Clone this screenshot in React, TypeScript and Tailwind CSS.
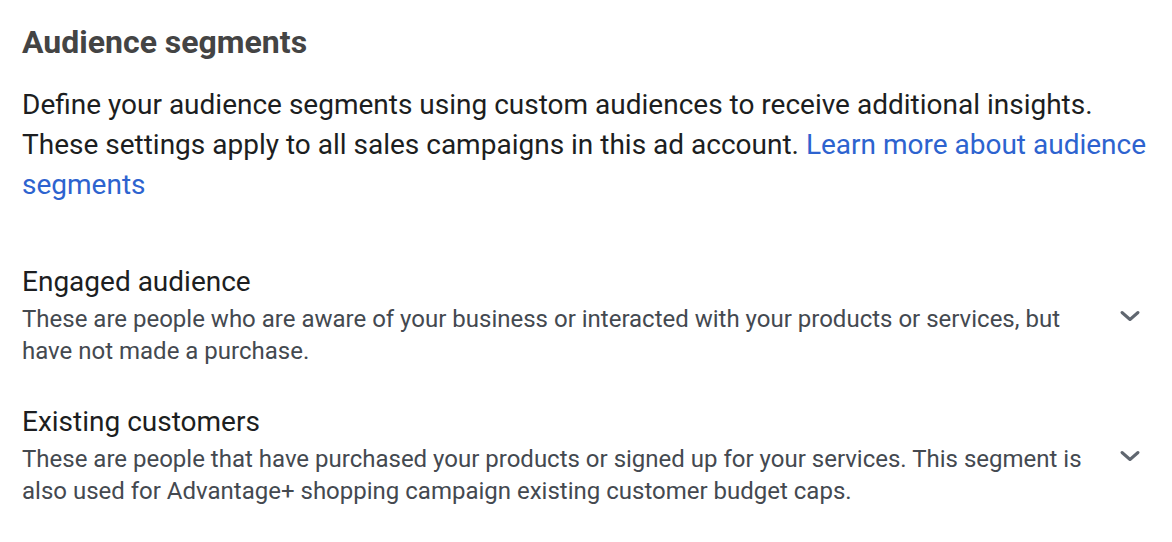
import React from 'react';

const Chevron = () => (
  <svg width="24" height="24" viewBox="0 0 24 24" fill="none">
    <path d="M4 8.5l8 7 8-7" stroke="#606770" strokeWidth="3" strokeLinecap="round" strokeLinejoin="round" />
  </svg>
);

const segments = [
  {
    title: 'Engaged audience',
    text: 'These are people who are aware of your business or interacted with your products or services, but have not made a purchase.',
  },
  {
    title: 'Existing customers',
    text: 'These are people that have purchased your products or signed up for your services. This segment is also used for Advantage+ shopping campaign existing customer budget caps.',
  },
];

const App = () => {
  return (
    <div className="w-[1172px] h-[542px] bg-white pl-[22px] pr-[20px] pt-[22px] font-['Roboto',sans-serif] overflow-hidden">
      <h1 className="text-[32px] leading-[40px] font-bold text-[#444444]">Audience segments</h1>
      <p className="mt-[23px] text-[28px] leading-[40px] text-[#1c1e21]">
        Define your audience segments using custom audiences to receive additional insights. These settings apply
        to all sales campaigns in this ad account.{' '}
        <a className="text-[#2d63cf]">Learn more about audience segments</a>
      </p>
      <div className="mt-[59px] flex flex-col gap-[37px]">
        {segments.map((s) => (
          <div key={s.title} className="flex items-center">
            <div className="w-[1076px]">
              <div className="text-[28px] leading-[36px] text-[#1c1e21]">{s.title}</div>
              <div className="mt-[3px] text-[24px] leading-[32px] text-[#444950]">{s.text}</div>
            </div>
            <div className="ml-[20px] w-[24px] flex justify-center">
              <Chevron />
            </div>
          </div>
        ))}
      </div>
    </div>
  );
};

export default App;
